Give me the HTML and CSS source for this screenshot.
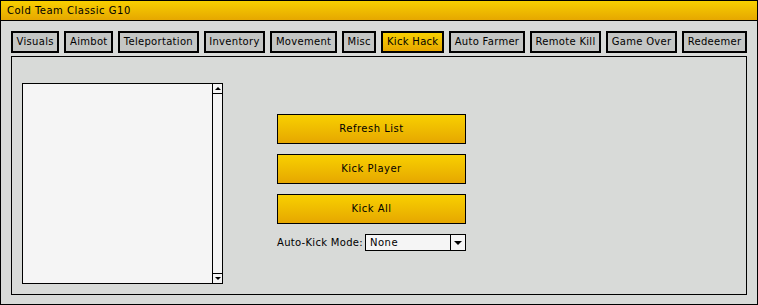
FILE: index.html
```html
<!DOCTYPE html>
<html lang="en">
<head>
  <meta charset="UTF-8">
  <title>Cold Team Classic G10</title>
  <link rel="stylesheet" href="styles.css">
</head>
<body>
  <div class="window">
    <div class="titlebar">Cold Team Classic G10</div>

    <div class="window-body">
      <div class="tabs">
        <div class="tab">Visuals</div>
        <div class="tab">Aimbot</div>
        <div class="tab">Teleportation</div>
        <div class="tab">Inventory</div>
        <div class="tab">Movement</div>
        <div class="tab">Misc</div>
        <div class="tab active">Kick Hack</div>
        <div class="tab">Auto Farmer</div>
        <div class="tab">Remote Kill</div>
        <div class="tab">Game Over</div>
        <div class="tab">Redeemer</div>
      </div>

      <div class="panel">
        <div class="listbox">
          <div class="list-items"></div>
          <div class="scrollbar">
            <div class="scroll-btn"><span class="arrow up"></span></div>
            <div class="scroll-track"></div>
            <div class="scroll-btn"><span class="arrow down"></span></div>
          </div>
        </div>

        <div class="actions">
          <button class="action-btn">Refresh List</button>
          <button class="action-btn">Kick Player</button>
          <button class="action-btn">Kick All</button>

          <div class="mode-row">
            <label>Auto-Kick Mode:</label>
            <div class="select">
              <span class="select-value">None</span>
              <span class="select-arrow"><span class="arrow down"></span></span>
            </div>
          </div>
        </div>
      </div>
    </div>
  </div>
</body>
</html>
```

FILE: styles.css
```css
:root {
  --gold-top: #f8d000;
  --gold-bottom: #e6a700;
  --bg: #d8dad8;
  --tab-bg: #c4c6c4;
  --field-bg: #f5f5f5;
  --line: #000;
}

html, body {
  margin: 0;
  padding: 0;
}

body {
  width: 758px;
  height: 305px;
  font-family: "DejaVu Sans", sans-serif;
  font-size: 10px;
  letter-spacing: 0.5px;
  white-space: nowrap;
  color: #000;
  background: var(--bg);
}

.window {
  box-sizing: border-box;
  width: 758px;
  height: 305px;
  border: 1px solid var(--line);
  display: flex;
  flex-direction: column;
}

.titlebar {
  height: 19px;
  line-height: 19px;
  padding-left: 6px;
  background: linear-gradient(var(--gold-top), var(--gold-bottom));
  border-bottom: 1px solid var(--line);
}

.window-body {
  flex: 1;
  min-height: 0;
  padding: 10px 10px 9px 10px;
  display: flex;
  flex-direction: column;
}

.tabs {
  display: flex;
  gap: 5px;
}

.tab {
  flex: 1 1 auto;
  height: 18px;
  line-height: 18px;
  text-align: center;
  padding: 0 2px;
  letter-spacing: 0.3px;
  border: 2px solid var(--line);
  background: var(--tab-bg);
}

.tab.active {
  background: linear-gradient(var(--gold-top), var(--gold-bottom));
}

.panel {
  flex: 1;
  min-height: 0;
  margin-top: 3px;
  border: 1px solid var(--line);
  display: flex;
  align-items: flex-start;
  padding: 26px 10px 0;
}

.listbox {
  width: 201px;
  height: 201px;
  box-sizing: border-box;
  border: 1px solid var(--line);
  background: var(--field-bg);
  display: flex;
}

.list-items {
  flex: 1;
}

.scrollbar {
  width: 9px;
  border-left: 1px solid var(--line);
  display: flex;
  flex-direction: column;
}

.scroll-btn {
  height: 9px;
  display: flex;
  align-items: center;
  justify-content: center;
}

.scroll-btn:first-child {
  border-bottom: 1px solid var(--line);
}

.scroll-btn:last-child {
  border-top: 1px solid var(--line);
}

.scroll-track {
  flex: 1;
}

.arrow {
  width: 0;
  height: 0;
  border-left: 3px solid transparent;
  border-right: 3px solid transparent;
}

.arrow.up {
  border-bottom: 3px solid var(--line);
}

.arrow.down {
  border-top: 3px solid var(--line);
}

.actions {
  margin-left: 54px;
  margin-top: 31px;
  width: 189px;
  display: flex;
  flex-direction: column;
}

.action-btn {
  height: 30px;
  margin-bottom: 10px;
  border: 1px solid var(--line);
  background: linear-gradient(var(--gold-top), var(--gold-bottom));
  font-family: inherit;
  font-size: 10px;
  letter-spacing: 0.5px;
  color: #000;
  padding: 0 0 1px;
}

.mode-row {
  display: flex;
  align-items: center;
  justify-content: space-between;
}

.mode-row label {
  letter-spacing: 0.3px;
}

.select {
  width: 101px;
  height: 17px;
  box-sizing: border-box;
  border: 1px solid var(--line);
  background: var(--field-bg);
  display: flex;
}

.select-value {
  flex: 1;
  line-height: 15px;
  padding-left: 4px;
}

.select-arrow {
  width: 14px;
  border-left: 1px solid var(--line);
  display: flex;
  align-items: center;
  justify-content: center;
}

.select-arrow .arrow {
  border-left-width: 4px;
  border-right-width: 4px;
  border-top-width: 4px;
}
```
